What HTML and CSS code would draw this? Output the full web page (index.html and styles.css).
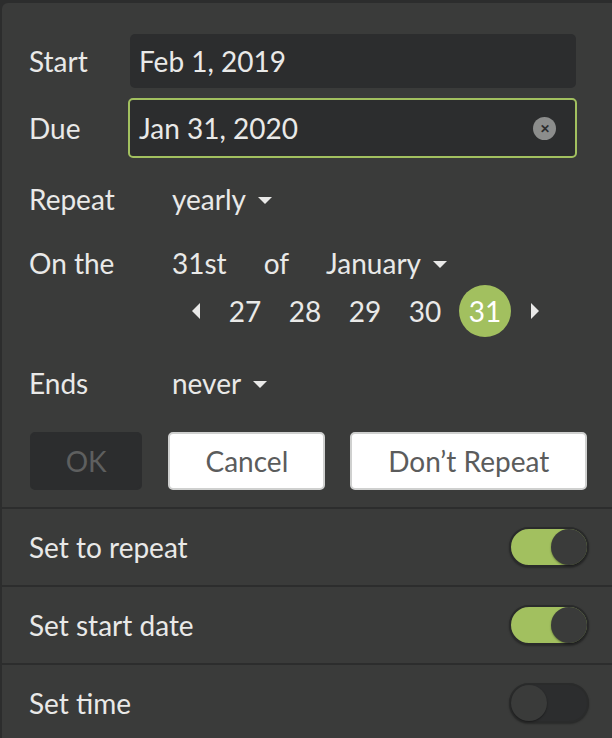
FILE: index.html
```html
<!DOCTYPE html>
<html lang="en">
<head>
	<meta charset="UTF-8">
	<title>Repeat</title>
	<link rel="stylesheet" href="styles.css">
</head>
<body>
	<div class="panel">
		<div class="dates">
			<div class="field">
				<span class="label">Start</span>
				<div class="input">Feb 1, 2019</div>
			</div>
			<div class="field">
				<span class="label">Due</span>
				<div class="input focus">Jan 31, 2020<span class="clear">&#x2715;</span></div>
			</div>
		</div>

		<div class="repeat">
			<div class="row">
				<span class="label">Repeat</span>
				<span class="select">yearly<i class="caret"></i></span>
			</div>
			<div class="row on">
				<span class="label">On the</span>
				<div class="on-body">
					<div class="on-line">
						<span class="select">31st</span>
						<span class="of">of</span>
						<span class="select">January<i class="caret"></i></span>
					</div>
					<div class="days">
						<i class="arrow left"></i>
						<span class="day">27</span>
						<span class="day">28</span>
						<span class="day">29</span>
						<span class="day">30</span>
						<span class="day cur">31</span>
						<i class="arrow right"></i>
					</div>
				</div>
			</div>
			<div class="row ends">
				<span class="label">Ends</span>
				<span class="select">never<i class="caret"></i></span>
			</div>
			<div class="buttons">
				<button class="btn ok">OK</button>
				<button class="btn cancel">Cancel</button>
				<button class="btn dont">Don’t Repeat</button>
			</div>
		</div>

		<ul class="toggles">
			<li><span>Set to repeat</span><i class="switch checked"></i></li>
			<li><span>Set start date</span><i class="switch checked"></i></li>
			<li><span>Set time</span><i class="switch"></i></li>
		</ul>
	</div>
</body>
</html>
```

FILE: styles.css
```css
*{
	padding: 0;
	margin: 0;
	box-sizing: border-box;
}
body {
	background: #2c2d2d;
	font-family: Lato, "Liberation Sans", sans-serif;
	color: #e9e9e8;
	font-size: 28px;
	line-height: 34px;
}
ul {
	list-style: none;
}
.panel {
	margin: 3px 0 0 2px;
	height: 735px;
	background: #3a3b3a;
	border-top-left-radius: 6px;
	overflow: hidden;
}
.dates {
	padding: 26px 36px 0 27px;
}
.field {
	display: flex;
	align-items: center;
	height: 64px;
}
.field + .field {
	margin-top: 3px;
}
.field .label {
	width: 101px;
}
.input {
	flex: 1;
	height: 54px;
	line-height: 54px;
	padding-left: 9px;
	background: #2c2d2e;
	border-radius: 5px;
	position: relative;
}
.input.focus {
	height: 60px;
	line-height: 56px;
	margin-left: -2px;
	margin-right: -1px;
	padding-left: 9px;
	border: 2px solid #a2c05f;
}
.clear {
	position: absolute;
	right: 19px;
	top: 17px;
	width: 23px;
	height: 23px;
	line-height: 23px;
	border-radius: 50%;
	background: #8c8d8c;
	color: #2c2d2e;
	font-size: 12px;
	font-weight: bold;
	text-align: center;
}
.repeat {
	padding: 10px 25px 0 27px;
}
.row {
	display: flex;
	align-items: flex-start;
	min-height: 64px;
	padding-top: 12px;
}
.row .label {
	width: 143px;
}
.select {
	display: inline-flex;
	align-items: center;
}
.caret {
	display: inline-block;
	margin-left: 12px;
	margin-top: 2px;
	border-left: 7px solid transparent;
	border-right: 7px solid transparent;
	border-top: 7px solid #e9e9e8;
}
.on-body {
	flex: 1;
}
.on-line {
	display: flex;
	align-items: center;
	height: 34px;
}
.of {
	margin-left: 37px;
	margin-right: 37px;
}
.days {
	display: flex;
	align-items: center;
	margin-top: 5px;
	margin-left: 20px;
	height: 52px;
}
.day {
	width: 60px;
	text-align: center;
}
.day.cur {
	width: 52px;
	height: 52px;
	line-height: 52px;
	margin: 0 4px;
	border-radius: 50%;
	background: #a2c05f;
	color: #fff;
}
.arrow {
	display: inline-block;
	border-top: 8px solid transparent;
	border-bottom: 8px solid transparent;
}
.arrow.left {
	border-right: 8px solid #e9e9e8;
	margin-right: 15px;
}
.arrow.right {
	border-left: 8px solid #e9e9e8;
	margin-left: 16px;
}
.row.on {
	min-height: 126px;
}
.row.ends {
	min-height: 72px;
	padding-top: 6px;
}
.buttons {
	display: flex;
	gap: 25px;
	height: 75px;
}
.btn {
	font-family: Lato, "Liberation Sans", sans-serif;
	font-size: 28px;
	height: 58px;
	border-radius: 5px;
	border: 2px solid #cfd0cf;
	background: #fff;
	color: #5b5c5c;
}
.btn.ok {
	width: 113px;
	margin-left: 1px;
	margin-right: 1px;
	background: #2c2d2e;
	border-color: #2c2d2e;
	color: #5e5f5f;
}
.btn.cancel {
	width: 158px;
}
.btn.dont {
	width: 238px;
}
.toggles li {
	display: flex;
	align-items: center;
	justify-content: space-between;
	height: 78px;
	padding: 0 23px 0 27px;
	border-top: 2px solid #2c2d2d;
}
.switch {
	width: 80px;
	height: 40px;
	border-radius: 20px;
	background: #2c2d2e;
	border: 2px solid #2a2b2b;
	position: relative;
	box-shadow: 0 1px 2px rgba(0,0,0,0.3);
}
.switch::after {
	content: "";
	position: absolute;
	left: 0;
	top: 0;
	width: 36px;
	height: 36px;
	border-radius: 50%;
	background: #3a3b3a;
	box-shadow: 0 1px 2px rgba(0,0,0,0.4);
}
.switch.checked {
	background: #a2c05f;
}
.switch.checked::after {
	left: auto;
	right: 0;
}
```
